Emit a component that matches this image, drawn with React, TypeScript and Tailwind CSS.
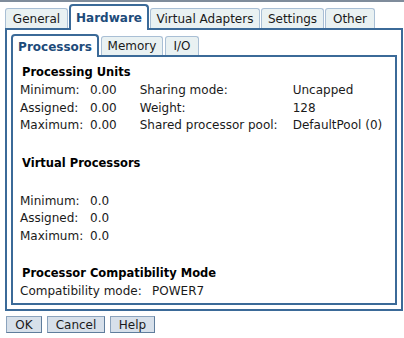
import React from 'react';

// Properties dialog: processor tab of the partition hardware settings
const outerTabs = [
    { label: 'General', w: 'w-[63px]' },
    { label: 'Hardware', w: 'w-[80px]', active: true },
    { label: 'Virtual Adapters', w: 'w-[110px]' },
    { label: 'Settings', w: 'w-[63px]' },
    { label: 'Other', w: 'w-[50px]' },
];

const innerTabs = [
    { label: 'Processors', w: 'w-[88px]', active: true },
    { label: 'Memory', w: 'w-[62px]' },
    { label: 'I/O', w: 'w-[34px]' },
];

const Row = ({ label, value }: { label: string; value: string }) => (
    <div className="flex h-[17.5px] items-center">
        <span className="w-[70px]">{label}</span>
        <span>{value}</span>
    </div>
);

const App = () => {
    return (
        <div className="w-[404px] h-[338px] bg-white text-[12px] text-[#1a1a1a] overflow-hidden" style={{ fontFamily: '"DejaVu Sans", Verdana, sans-serif' }}>
            <div className="h-[2px] bg-[#7f8c9b]" />

            <div className="ml-[5px] w-[398px]">
                {/* Outer tabs */}
                <div className="flex items-end gap-[1px] h-[26px] relative z-10">
                    {outerTabs.map((t) =>
                        t.active ? (
                            <div key={t.label} className={`${t.w} h-[26px] -mb-[2px] flex items-center justify-center bg-white border-2 border-b-0 border-[#3b6a98] rounded-t-[4px] font-bold text-[#1d4b7a]`}>
                                {t.label}
                            </div>
                        ) : (
                            <div key={t.label} className={`${t.w} h-[20px] flex items-center justify-center bg-[#e9f1f2] border border-b-0 border-[#a9bfd5] rounded-t-[3px]`}>
                                {t.label}
                            </div>
                        )
                    )}
                </div>

                {/* Outer frame */}
                <div className="border-2 border-[#3b6a98] h-[283px] px-[4px] pt-[3px]">
                    {/* Inner tabs */}
                    <div className="flex items-end gap-[2px] h-[22px] relative z-10">
                        {innerTabs.map((t) =>
                            t.active ? (
                                <div key={t.label} className={`${t.w} h-[23px] -mb-[2px] flex items-center justify-center bg-white border-2 border-b-0 border-[#3b6a98] rounded-t-[4px] font-bold text-[#1d4b7a]`}>
                                    {t.label}
                                </div>
                            ) : (
                                <div key={t.label} className={`${t.w} h-[19px] flex items-center justify-center bg-[#e9f1f2] border border-b-0 border-[#a9bfd5] rounded-t-[3px]`}>
                                    {t.label}
                                </div>
                            )
                        )}
                    </div>

                    {/* Inner frame */}
                    <div className="border-2 border-[#3b6a98] h-[250px] pl-[7px] pt-[7px]">
                        <div className="h-[17.5px] flex items-center pl-[2px] font-bold text-black text-[11.5px]">Processing Units</div>
                        <div className="flex">
                            <div>
                                <Row label="Minimum:" value="0.00" />
                                <Row label="Assigned:" value="0.00" />
                                <Row label="Maximum:" value="0.00" />
                            </div>
                            <div className="ml-[23px]">
                                <div className="flex h-[17.5px] items-center"><span className="w-[153px]">Sharing mode:</span><span>Uncapped</span></div>
                                <div className="flex h-[17.5px] items-center"><span className="w-[153px]">Weight:</span><span>128</span></div>
                                <div className="flex h-[17.5px] items-center"><span className="w-[153px]">Shared processor pool:</span><span>DefaultPool (0)</span></div>
                            </div>
                        </div>

                        <div className="mt-[21px] h-[17.5px] flex items-center pl-[2px] font-bold text-black text-[11.5px]">Virtual Processors</div>
                        <div className="mt-[19.5px]">
                            <Row label="Minimum:" value="0.0" />
                            <Row label="Assigned:" value="0.0" />
                            <Row label="Maximum:" value="0.0" />
                        </div>

                        <div className="mt-[20.5px] h-[17.5px] flex items-center pl-[2px] font-bold text-black text-[11.5px]">Processor Compatibility Mode</div>
                        <div className="flex h-[17.5px] items-center">
                            <span className="w-[132px]">Compatibility mode:</span>
                            <span>POWER7</span>
                        </div>
                    </div>
                </div>

                {/* Dialog buttons */}
                <div className="flex gap-[5px] mt-[5px] pl-[1px]">
                    <button className="w-[36px] h-[17px] flex items-center justify-center bg-[#d7e0ea] border border-[#8ba3bd] border-r-[#5f7d9c] border-b-[#5f7d9c] text-[12px] leading-none">OK</button>
                    <button className="w-[58px] h-[17px] flex items-center justify-center bg-[#d7e0ea] border border-[#8ba3bd] border-r-[#5f7d9c] border-b-[#5f7d9c] text-[12px] leading-none">Cancel</button>
                    <button className="w-[45px] h-[17px] flex items-center justify-center bg-[#d7e0ea] border border-[#8ba3bd] border-r-[#5f7d9c] border-b-[#5f7d9c] text-[12px] leading-none">Help</button>
                </div>
            </div>
        </div>
    );
};

export default App;
